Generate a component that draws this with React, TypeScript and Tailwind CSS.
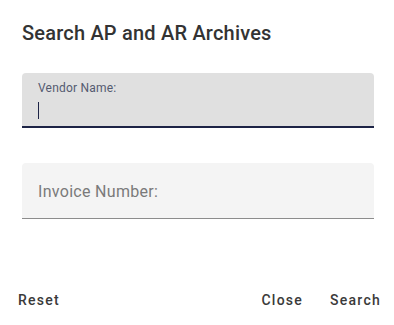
export default function App() {
  return (
    <div
      className="w-[394px] h-[325px] bg-white flex flex-col"
      style={{ fontFamily: "Roboto, 'Liberation Sans', sans-serif" }}
    >
      <h2 className="pt-[17px] px-[22px] text-[20px] leading-8 font-medium text-[#333333] tracking-[0.2px]">
        Search AP and AR Archives
      </h2>
      <div className="pl-[22px] pr-[20px] pt-[24px] flex flex-col gap-[35px]">
        <div className="h-[55px] bg-[#e0e0e0] rounded-t-[4px] border-b-2 border-[#1d2446] pl-4 pt-[8px] flex flex-col">
          <span className="text-[12px] leading-[14px] text-[#545b70] tracking-[0.2px]">Vendor Name:</span>
          <span className="mt-[7px] w-px h-[17px] bg-[#1d2446]"></span>
        </div>
        <div className="h-[56px] bg-[#f4f4f4] rounded-t-[4px] border-b border-[#8c8c8c] pl-4 pt-[2px] flex items-center">
          <span className="text-[16px] text-[#7a7a7a] tracking-[0.3px]">Invoice Number:</span>
        </div>
      </div>
      <div className="mt-auto mb-[14px] flex items-center pl-[18px] pr-[13px] text-[14px] font-medium text-[#3a3a3a] tracking-[1.25px]">
        <button className="bg-transparent">Reset</button>
        <div className="flex-1"></div>
        <button className="bg-transparent">Close</button>
        <button className="bg-transparent ml-[27px]">Search</button>
      </div>
    </div>
  );
}
